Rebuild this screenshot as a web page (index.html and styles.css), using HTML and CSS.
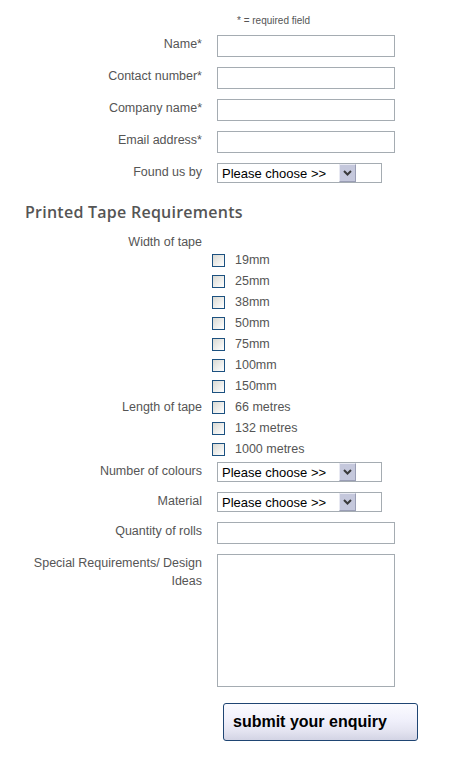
FILE: index.html
```html
<!DOCTYPE html>
<html lang="en">
<head>
<meta charset="utf-8">
<title>Printed Tape Enquiry</title>
<link rel="stylesheet" href="styles.css">
</head>
<body>
<form class="form">
  <div class="note">* = required field</div>

  <div class="row">
    <label class="lbl">Name*</label>
    <div class="field"><input class="text-input" type="text"></div>
  </div>
  <div class="row gap">
    <label class="lbl">Contact number*</label>
    <div class="field"><input class="text-input" type="text"></div>
  </div>
  <div class="row gap">
    <label class="lbl">Company name*</label>
    <div class="field"><input class="text-input" type="text"></div>
  </div>
  <div class="row gap">
    <label class="lbl">Email address*</label>
    <div class="field"><input class="text-input" type="text"></div>
  </div>
  <div class="row gap">
    <label class="lbl">Found us by</label>
    <div class="field">
      <span class="select"><span class="select-text">Please choose &gt;&gt;</span><span class="select-btn"><svg width="9" height="6" viewBox="0 0 9 6"><polyline points="1,1 4.5,4.5 8,1" fill="none" stroke="#3a3a3a" stroke-width="2"/></svg></span></span>
    </div>
  </div>

  <h2 class="heading">Printed Tape Requirements</h2>

  <div class="row label-only">
    <label class="lbl">Width of tape</label>
  </div>

  <div class="check-row"><span class="lbl"></span><div class="check-field"><input class="check" type="checkbox"><span class="check-label">19mm</span></div></div>
  <div class="check-row"><span class="lbl"></span><div class="check-field"><input class="check" type="checkbox"><span class="check-label">25mm</span></div></div>
  <div class="check-row"><span class="lbl"></span><div class="check-field"><input class="check" type="checkbox"><span class="check-label">38mm</span></div></div>
  <div class="check-row"><span class="lbl"></span><div class="check-field"><input class="check" type="checkbox"><span class="check-label">50mm</span></div></div>
  <div class="check-row"><span class="lbl"></span><div class="check-field"><input class="check" type="checkbox"><span class="check-label">75mm</span></div></div>
  <div class="check-row"><span class="lbl"></span><div class="check-field"><input class="check" type="checkbox"><span class="check-label">100mm</span></div></div>
  <div class="check-row"><span class="lbl"></span><div class="check-field"><input class="check" type="checkbox"><span class="check-label">150mm</span></div></div>
  <div class="check-row"><span class="lbl">Length of tape</span><div class="check-field"><input class="check" type="checkbox"><span class="check-label">66 metres</span></div></div>
  <div class="check-row"><span class="lbl"></span><div class="check-field"><input class="check" type="checkbox"><span class="check-label">132 metres</span></div></div>
  <div class="check-row"><span class="lbl"></span><div class="check-field"><input class="check" type="checkbox"><span class="check-label">1000 metres</span></div></div>

  <div class="row after-checks">
    <label class="lbl">Number of colours</label>
    <div class="field">
      <span class="select"><span class="select-text">Please choose &gt;&gt;</span><span class="select-btn"><svg width="9" height="6" viewBox="0 0 9 6"><polyline points="1,1 4.5,4.5 8,1" fill="none" stroke="#3a3a3a" stroke-width="2"/></svg></span></span>
    </div>
  </div>
  <div class="row gap">
    <label class="lbl">Material</label>
    <div class="field">
      <span class="select"><span class="select-text">Please choose &gt;&gt;</span><span class="select-btn"><svg width="9" height="6" viewBox="0 0 9 6"><polyline points="1,1 4.5,4.5 8,1" fill="none" stroke="#3a3a3a" stroke-width="2"/></svg></span></span>
    </div>
  </div>
  <div class="row gap">
    <label class="lbl">Quantity of rolls</label>
    <div class="field"><input class="text-input" type="text"></div>
  </div>
  <div class="row gap">
    <label class="lbl tall">Special Requirements/ Design Ideas</label>
    <div class="field"><textarea class="textarea"></textarea></div>
  </div>

  <div class="submit-row">
    <button class="submit" type="button">submit your enquiry</button>
  </div>
</form>
</body>
</html>
```
FILE: styles.css
```css
html, body {
  margin: 0;
  padding: 0;
  background: #ffffff;
}

body {
  font-family: "Liberation Sans", Arial, sans-serif;
  color: #555555;
}

.form {
  padding-top: 15px;
  display: flex;
  flex-direction: column;
}

.note {
  margin-left: 237px;
  font-size: 10px;
  line-height: 12px;
  margin-bottom: 8px;
  color: #555555;
}

.row {
  display: flex;
  align-items: flex-start;
}

.row.gap {
  margin-top: 10px;
}

.row.after-checks {
  margin-top: 2px;
}

.lbl {
  flex: 0 0 170px;
  width: 170px;
  margin-left: 32px;
  text-align: right;
  font-size: 12.5px;
  line-height: 15px;
  padding-top: 2px;
  color: #555555;
}

.lbl.tall {
  line-height: 18px;
  padding-top: 0;
}

.field {
  margin-left: 15px;
  display: flex;
}

.text-input {
  width: 178px;
  height: 22px;
  box-sizing: border-box;
  border: 1px solid #a5acb2;
  margin: 0;
  padding: 0 3px;
  background: #fff;
  font: inherit;
}

.textarea {
  width: 178px;
  height: 133px;
  box-sizing: border-box;
  border: 1px solid #a5acb2;
  margin: 0;
  padding: 2px;
  resize: none;
  display: block;
  background: #fff;
}

.select {
  display: flex;
  align-items: center;
  width: 165px;
  height: 20px;
  box-sizing: border-box;
  border: 1px solid #a5acb2;
  background: #fff;
}

.select-text {
  width: 121px;
  box-sizing: border-box;
  padding-left: 4px;
  font-size: 13px;
  line-height: 15px;
  color: #000;
  white-space: nowrap;
}

.select-btn {
  width: 17px;
  height: 18px;
  box-sizing: border-box;
  background: #c5c8dc;
  border: 1px solid;
  border-color: #e9eaf3 #9a9eb5 #9a9eb5 #e9eaf3;
  display: flex;
  align-items: center;
  justify-content: center;
}

.select-btn svg {
  display: block;
}

.heading {
  margin: 19px 0 0 0;
  padding-left: 25px;
  font-family: "Open Sans", "Liberation Sans", sans-serif;
  font-weight: 600;
  font-size: 16px;
  letter-spacing: 0.25px;
  line-height: 20px;
  color: #555555;
}

.row.label-only {
  margin-top: 12px;
}

.row.label-only .lbl {
  padding-top: 1px;
}

.check-row {
  display: flex;
  align-items: center;
  height: 21px;
}

.check-row .lbl {
  padding-top: 0;
}

.check-field {
  margin-left: 10px;
  display: flex;
  align-items: center;
}

.check {
  -webkit-appearance: none;
  appearance: none;
  width: 13px;
  height: 13px;
  margin: 0;
  box-sizing: border-box;
  border: 1px solid #1c5180;
  background: linear-gradient(135deg, #d9d9d3 0%, #f4f4f2 70%, #ffffff 100%);
}

.check-label {
  margin-left: 10px;
  font-size: 12.5px;
  line-height: 15px;
  color: #555555;
}

.submit-row {
  margin-top: 16px;
  padding-left: 223px;
  display: flex;
}

.submit {
  width: 195px;
  height: 38px;
  box-sizing: border-box;
  border: 1px solid #1f4573;
  border-radius: 3px;
  background: linear-gradient(#fbfbff 0%, #f0f0fb 45%, #e4e4f1 75%, #d3d4e4 100%);
  font-family: "Liberation Sans", Arial, sans-serif;
  font-weight: bold;
  font-size: 16px;
  color: #000;
  text-align: left;
  padding: 0 0 0 9px;
  margin: 0;
}
```
